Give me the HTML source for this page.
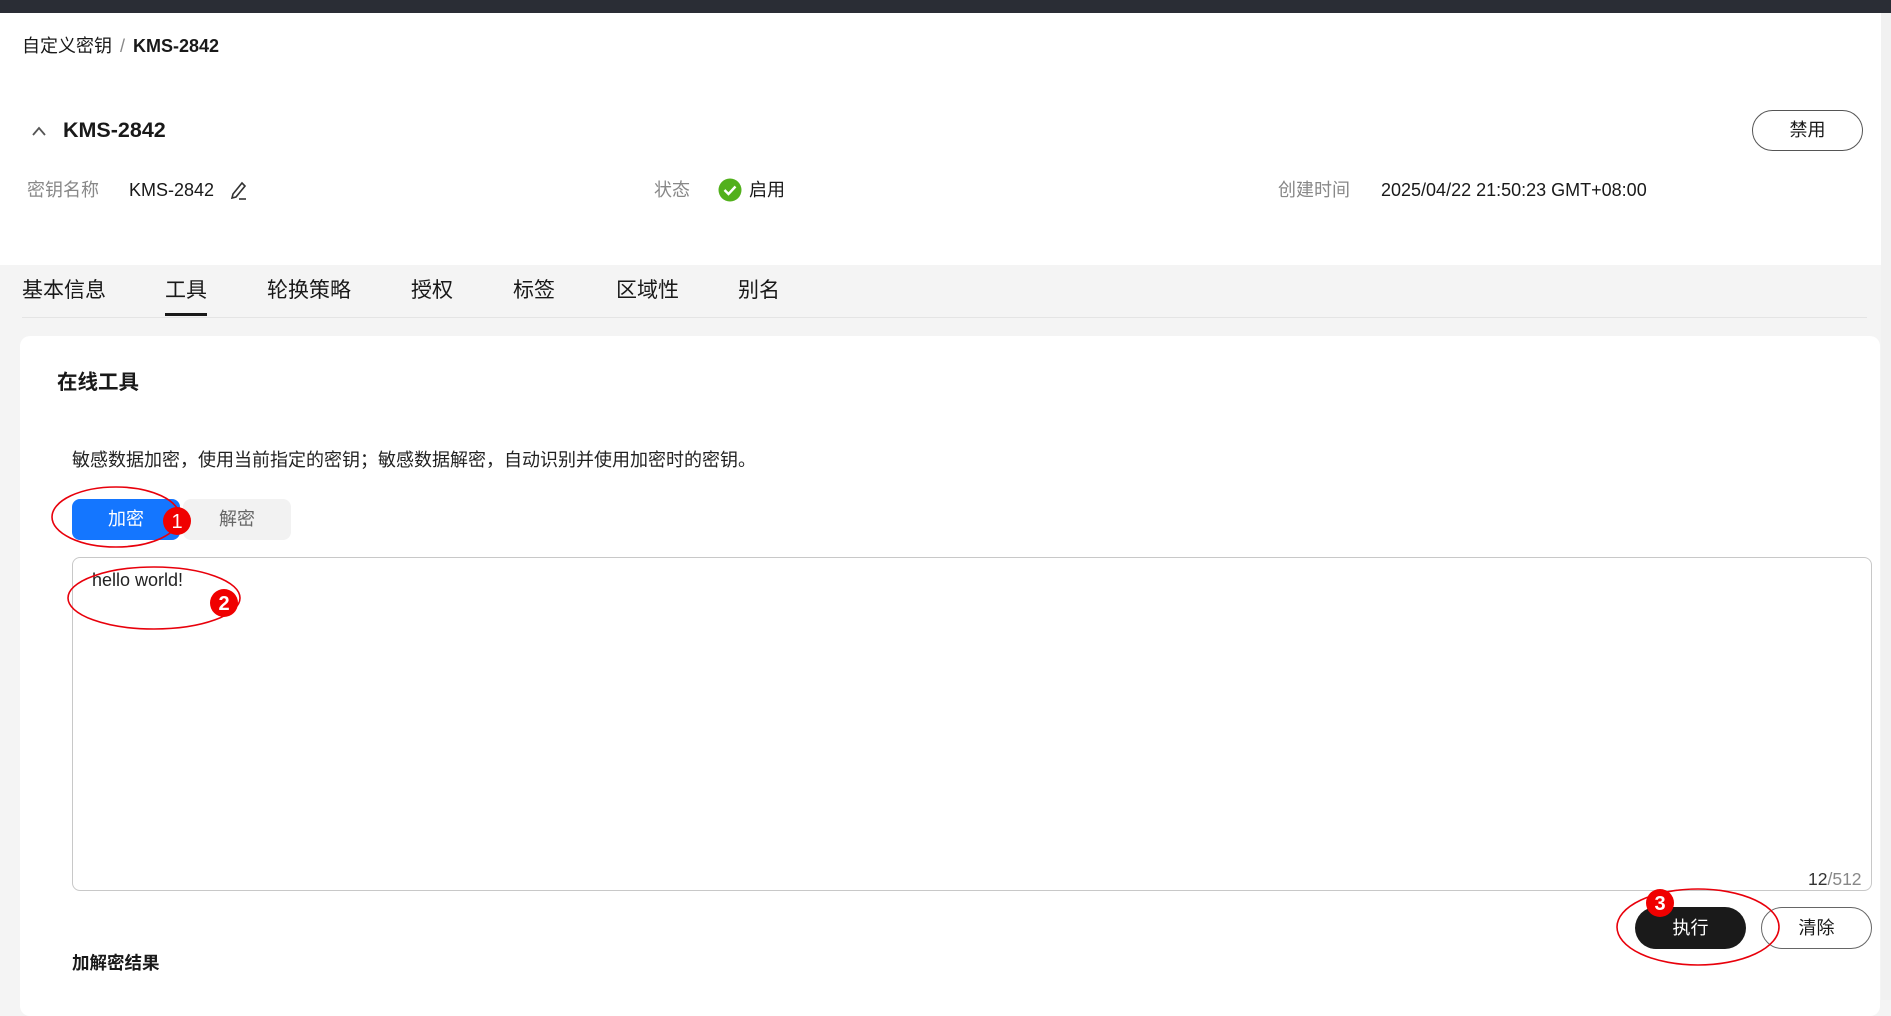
<!DOCTYPE html>
<html><head><meta charset="utf-8"><style>
*{margin:0;padding:0;box-sizing:border-box}
body{width:1891px;height:1000px;overflow:hidden;background:#f4f4f4;font-family:"Liberation Sans","Noto Sans CJK SC",sans-serif;color:#191919;position:relative}
.a{position:absolute;white-space:nowrap}
</style></head><body>
<div class="a" style="left:0;top:0;width:1891px;height:13px;background:#2a2d35"></div>
<div class="a" style="left:0;top:13px;width:1887px;height:252px;background:#fff"></div>
<div class="a" style="left:22px;top:34px;font-size:18px;line-height:24px"><span>自定义密钥</span><span style="color:#888;margin:0 8px">/</span><b>KMS-2842</b></div>
<svg class="a" style="left:31px;top:125px" width="16" height="12" viewBox="0 0 16 12"><path d="M2 10 L8 3 L14 10" fill="none" stroke="#555" stroke-width="1.8"/></svg>
<div class="a" style="left:63px;top:117px;font-size:21.5px;font-weight:bold;line-height:26px">KMS-2842</div>
<div class="a" style="left:1752px;top:110px;width:111px;height:41px;border:1px solid #555;border-radius:21px;font-size:18px;line-height:39px;text-align:center">禁用</div>
<div class="a" style="left:27px;top:179px;font-size:18px;color:#888;line-height:22px">密钥名称</div>
<div class="a" style="left:129px;top:179px;font-size:18px;line-height:22px">KMS-2842</div>
<svg class="a" style="left:228px;top:179px" width="22" height="22" viewBox="0 0 22 22"><path d="M5 15 L14 4 L17 7 L8 18 L4 19 Z" fill="none" stroke="#333" stroke-width="1.6"/><path d="M11 20 H18" stroke="#333" stroke-width="1.6"/></svg>
<div class="a" style="left:654px;top:179px;font-size:18px;color:#888;line-height:22px">状态</div>
<svg class="a" style="left:718px;top:178px" width="24" height="24" viewBox="0 0 24 24"><circle cx="12" cy="12" r="11.5" fill="#52b01c"/><path d="M6.5 12 L10.5 16 L17.5 8.5" fill="none" stroke="#fff" stroke-width="2.4"/></svg>
<div class="a" style="left:749px;top:179px;font-size:18px;line-height:22px">启用</div>
<div class="a" style="left:1278px;top:179px;font-size:18px;color:#888;line-height:22px">创建时间</div>
<div class="a" style="left:1381px;top:179px;font-size:18px;line-height:22px">2025/04/22 21:50:23 GMT+08:00</div>
<div class="a" style="left:22px;top:278px;font-size:21px;line-height:26px">基本信息</div>
<div class="a" style="left:165px;top:278px;font-size:21px;line-height:26px">工具</div>
<div class="a" style="left:267px;top:278px;font-size:21px;line-height:26px">轮换策略</div>
<div class="a" style="left:411px;top:278px;font-size:21px;line-height:26px">授权</div>
<div class="a" style="left:513px;top:278px;font-size:21px;line-height:26px">标签</div>
<div class="a" style="left:616px;top:278px;font-size:21px;line-height:26px">区域性</div>
<div class="a" style="left:738px;top:278px;font-size:21px;line-height:26px">别名</div>
<div class="a" style="left:22px;top:317px;width:1845px;height:1px;background:#e4e4e4"></div>
<div class="a" style="left:165px;top:313px;width:42px;height:3px;background:#191919"></div>
<div class="a" style="left:20px;top:336px;width:1860px;height:680px;background:#fff;border-radius:10px"></div>
<div class="a" style="left:57px;top:370px;font-size:20.5px;font-weight:bold;line-height:26px">在线工具</div>
<div class="a" style="left:72px;top:449px;font-size:18px;line-height:22px;color:#222">敏感数据加密，使用当前指定的密钥；敏感数据解密，自动识别并使用加密时的密钥。</div>
<div class="a" style="left:183px;top:499px;width:108px;height:41px;background:#f2f2f2;border-radius:8px;color:#666;font-size:18px;line-height:41px;text-align:center">解密</div>
<div class="a" style="left:72px;top:499px;width:108px;height:41px;background:#1476ff;border-radius:8px;color:#fff;font-size:18px;line-height:41px;text-align:center">加密</div>
<div class="a" style="left:72px;top:557px;width:1800px;height:334px;border:1px solid #c8c8c8;border-radius:8px"></div>
<div class="a" style="left:92px;top:568px;font-size:18px;line-height:24px;color:#222">hello world!</div>
<div class="a" style="left:1808px;top:868px;font-size:17.5px;line-height:22px;color:#888"><span style="color:#333">12</span>/512</div>
<div class="a" style="left:1635px;top:907px;width:111px;height:42px;background:#1a1a1a;border-radius:21px;color:#fff;font-size:18px;line-height:42px;text-align:center">执行</div>
<div class="a" style="left:1761px;top:907px;width:111px;height:42px;border:1px solid #666;border-radius:21px;font-size:18px;line-height:40px;text-align:center">清除</div>
<div class="a" style="left:72px;top:952px;font-size:17.5px;font-weight:bold;line-height:22px">加解密结果</div>
<div class="a" style="left:1881px;top:13px;width:10px;height:987px;background:#f1f1f1"></div>
<svg class="a" style="left:0;top:0" width="1891" height="1000" viewBox="0 0 1891 1000">
<g fill="none" stroke="#e8000b" stroke-width="1.6">
<ellipse cx="116" cy="517" rx="64" ry="30"/>
<ellipse cx="154" cy="598" rx="86" ry="31"/>
<ellipse cx="1698" cy="927" rx="81" ry="38"/>
</g>
<g fill="#f00000"><circle cx="177" cy="521" r="14"/><circle cx="224" cy="603" r="14"/><circle cx="1660" cy="903" r="14"/></g>
<g fill="#fff" font-family="Liberation Sans, sans-serif" font-size="20" text-anchor="middle"><text x="177" y="528">1</text><text x="224" y="610" font-weight="bold">2</text><text x="1660" y="910" font-weight="bold">3</text></g>
</svg>
</body></html>
